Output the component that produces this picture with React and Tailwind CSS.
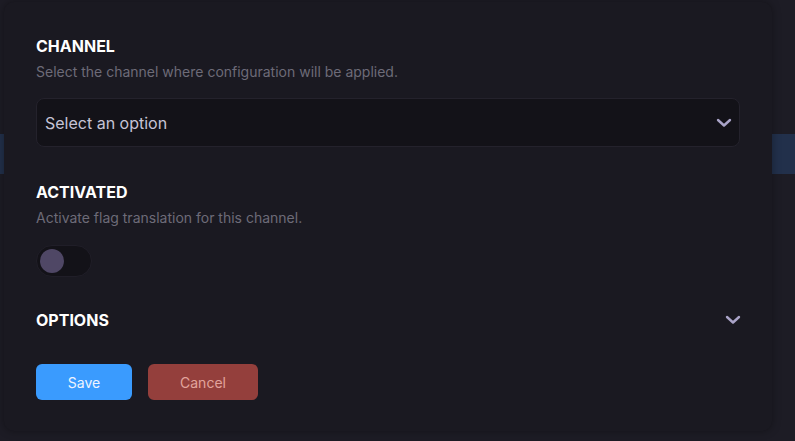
import React, { useState } from "react";

function Chevron({ className }) {
  return (
    <svg width="16" height="10" viewBox="0 0 16 10" fill="none" className={className}>
      <path d="M2 2 L8 7.5 L14 2" stroke="currentColor" strokeWidth="2.4" strokeLinecap="round" strokeLinejoin="round" />
    </svg>
  );
}

function Toggle({ on, onChange }) {
  return (
    <button
      onClick={() => onChange(!on)}
      className="flex items-center w-[56px] h-[32px] rounded-full bg-[#131218] border border-[#201e28] px-[3px]"
    >
      <span
        className={
          "block w-[24px] h-[24px] rounded-full bg-[#4f4765] transition " +
          (on ? "translate-x-[24px]" : "translate-x-0")
        }
      />
    </button>
  );
}

function Section({ title, desc, gap, children }) {
  return (
    <div className="flex flex-col">
      <h3 className="text-[16px] leading-[20px] font-bold text-white">{title}</h3>
      <p className="mt-[6px] text-[14px] leading-[20px] text-[#6d6b78]">{desc}</p>
      <div className={gap}>{children}</div>
    </div>
  );
}

export default function App() {
  const [activated, setActivated] = useState(false);

  return (
    <div
      className="relative w-[795px] h-[441px] overflow-hidden bg-[#1d1c25]"
      style={{ fontFamily: "Inter, 'Noto Sans', sans-serif" }}
    >
      {/* page behind the dialog */}
      <div className="flex flex-col pt-[134px]">
        <div className="h-[40px] bg-[#22304b]" />
      </div>

      {/* dialog */}
      <div className="absolute left-[4px] top-[2px] w-[768px] h-[429px] rounded-[10px] bg-[#1a1921] shadow-[0_0_8px_rgba(0,0,0,0.35)] px-8 pt-[34px]">
        <Section title="CHANNEL" desc="Select the channel where configuration will be applied." gap="mt-4">
          <button className="w-full h-[49px] flex items-center justify-between rounded-[8px] bg-[#131218] border border-[#24222c] pl-[8px] pr-[7px]">
            <span className="text-[16px] text-[#c6c3d6]">Select an option</span>
            <Chevron className="text-[#aaa4c8]" />
          </button>
        </Section>

        <div className="mt-[35px]">
          <Section title="ACTIVATED" desc="Activate flag translation for this channel." gap="mt-[17px]">
            <Toggle on={activated} onChange={setActivated} />
          </Section>
        </div>

        <div className="mt-[33px] flex items-center justify-between">
          <h3 className="text-[16px] leading-[20px] font-bold text-white">OPTIONS</h3>
          <Chevron className="text-[#aaa4c8] -mr-[1px]" />
        </div>

        <div className="mt-[34px] flex gap-4">
          <button className="w-[96px] h-[36px] rounded-[6px] bg-[#3a9bfe] text-[14px] text-[#eef4ff]">Save</button>
          <button className="w-[110px] h-[36px] rounded-[6px] bg-[#943f3c] text-[14px] text-[#e2a49c]">Cancel</button>
        </div>
      </div>
    </div>
  );
}
